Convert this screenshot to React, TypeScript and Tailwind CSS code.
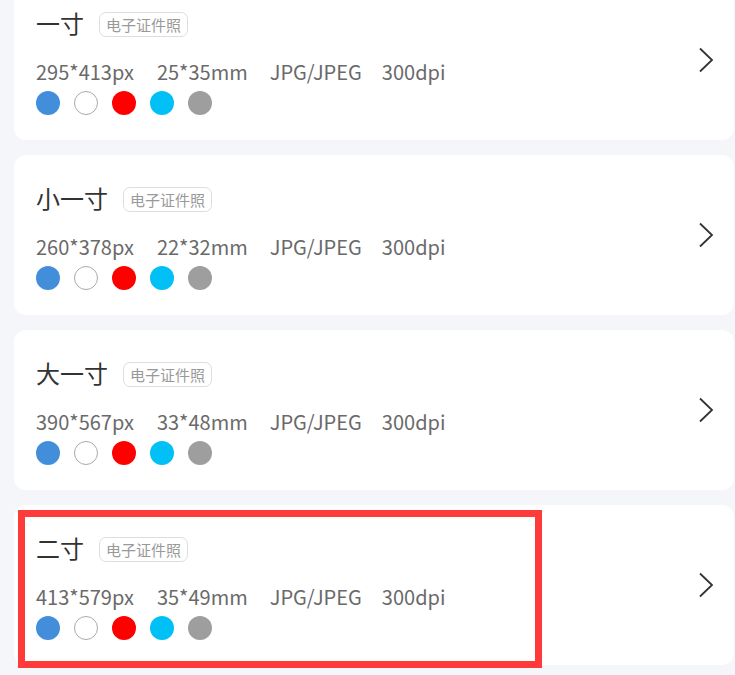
import React from "react";

type Item = { title: string; px: string; mm: string };

const items: Item[] = [
  { title: "一寸", px: "295*413px", mm: "25*35mm" },
  { title: "小一寸", px: "260*378px", mm: "22*32mm" },
  { title: "大一寸", px: "390*567px", mm: "33*48mm" },
  { title: "二寸", px: "413*579px", mm: "35*49mm" },
];

function Dots() {
  return (
    <div className="flex items-center gap-[14px]">
      <span className="block h-[24px] w-[24px] rounded-full bg-[#438edb]" />
      <span className="block h-[24px] w-[24px] rounded-full border border-[#aaaaaa] bg-white" />
      <span className="block h-[24px] w-[24px] rounded-full bg-[#ff0000]" />
      <span className="block h-[24px] w-[24px] rounded-full bg-[#00c0f5]" />
      <span className="block h-[24px] w-[24px] rounded-full bg-[#9e9e9e]" />
    </div>
  );
}

function Card({ item, highlight }: { item: Item; highlight?: boolean }) {
  return (
    <div className="relative ml-[14px] flex h-[160px] w-[720px] items-center rounded-[12px] bg-white pl-[22px] pr-[20px]">
      <div className="flex flex-1 flex-col self-stretch pt-[26px]">
        <div className="flex h-[34px] items-center">
          <span className="text-[24px] leading-[34px] text-[#333333]">{item.title}</span>
          <span className="ml-[15px] mt-[3px] flex h-[25px] items-center rounded-[7px] border border-[#dddddd] px-[6px] text-[15px] leading-none text-[#999999]">
            电子证件照
          </span>
        </div>
        <div className="mt-[18px] flex h-[28px] items-center text-[20px] leading-[28px] text-[#6a6a6a]">
          <span>{item.px}</span>
          <span className="ml-[23px]">{item.mm}</span>
          <span className="ml-[22px]">JPG/JPEG</span>
          <span className="ml-[20px]">300dpi</span>
        </div>
        <div className="mt-[5px]">
          <Dots />
        </div>
      </div>
      <svg width="16" height="26" viewBox="0 0 16 26" className="shrink-0">
        <polyline points="2,1.5 14,13 2,24.5" fill="none" stroke="#333333" strokeWidth="1.8" />
      </svg>
      {highlight && (
        <div className="pointer-events-none absolute left-[4px] top-[5px] h-[158px] w-[524px] border-[7px] border-[#ff3a3a]" />
      )}
    </div>
  );
}

export default function App() {
  return (
    <div
      className="h-[675px] w-[735px] overflow-hidden bg-[#f5f6fa]"
      style={{ fontFamily: '"Noto Sans CJK SC", "Noto Sans", sans-serif' }}
    >
      <div className="-mt-[20px] flex flex-col gap-[15px]">
        {items.map((it, i) => (
          <Card key={it.title} item={it} highlight={i === 3} />
        ))}
      </div>
    </div>
  );
}
